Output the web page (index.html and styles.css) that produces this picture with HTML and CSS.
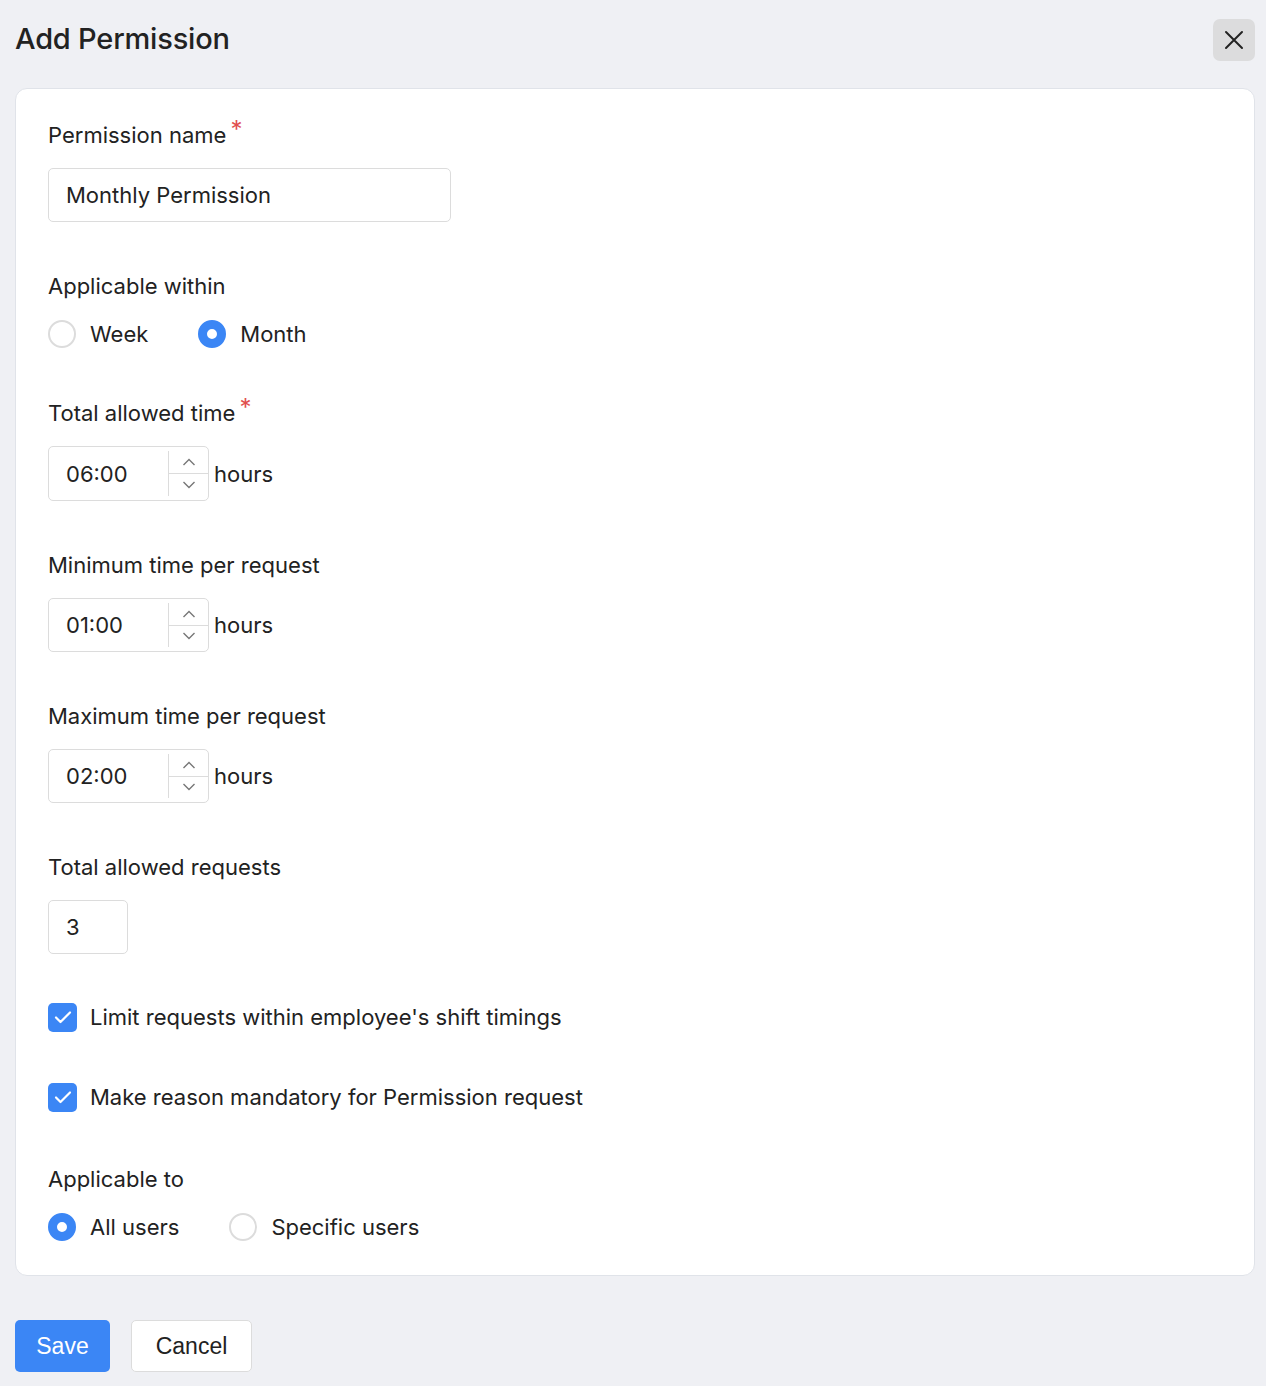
FILE: index.html
```html
<!DOCTYPE html>
<html>
<head>
<meta charset="utf-8">
<link rel="stylesheet" href="styles.css">
</head>
<body>
<div class="page">
  <header class="top">
    <h1 class="title">Add Permission</h1>
    <button class="close" aria-label="Close">
      <svg width="20" height="20" viewBox="0 0 20 20"><path d="M2 2L18 18M18 2L2 18" stroke="#222" stroke-width="2" stroke-linecap="round"/></svg>
    </button>
  </header>

  <section class="card">
    <div class="field">
      <div class="label">Permission name<span class="req">*</span></div>
      <div class="input name-input">Monthly Permission</div>
    </div>

    <div class="field">
      <div class="label">Applicable within</div>
      <div class="radios">
        <span class="radio-item"><span class="radio"></span>Week</span>
        <span class="radio-item"><span class="radio on"></span>Month</span>
      </div>
    </div>

    <div class="field total-field">
      <div class="label">Total allowed time<span class="req">*</span></div>
      <div class="time-row">
        <div class="spin">
          <span class="spin-val">06:00</span>
          <span class="spin-btns">
            <span class="arrow"><svg width="14" height="8" viewBox="0 0 14 8"><path d="M1.5 7L7 1.5L12.5 7" fill="none" stroke="#777" stroke-width="1.4"/></svg></span>
            <span class="arrow"><svg width="14" height="8" viewBox="0 0 14 8"><path d="M1.5 1L7 6.5L12.5 1" fill="none" stroke="#777" stroke-width="1.4"/></svg></span>
          </span>
        </div>
        <span class="unit">hours</span>
      </div>
    </div>

    <div class="field">
      <div class="label">Minimum time per request</div>
      <div class="time-row">
        <div class="spin">
          <span class="spin-val">01:00</span>
          <span class="spin-btns">
            <span class="arrow"><svg width="14" height="8" viewBox="0 0 14 8"><path d="M1.5 7L7 1.5L12.5 7" fill="none" stroke="#777" stroke-width="1.4"/></svg></span>
            <span class="arrow"><svg width="14" height="8" viewBox="0 0 14 8"><path d="M1.5 1L7 6.5L12.5 1" fill="none" stroke="#777" stroke-width="1.4"/></svg></span>
          </span>
        </div>
        <span class="unit">hours</span>
      </div>
    </div>

    <div class="field">
      <div class="label">Maximum time per request</div>
      <div class="time-row">
        <div class="spin">
          <span class="spin-val">02:00</span>
          <span class="spin-btns">
            <span class="arrow"><svg width="14" height="8" viewBox="0 0 14 8"><path d="M1.5 7L7 1.5L12.5 7" fill="none" stroke="#777" stroke-width="1.4"/></svg></span>
            <span class="arrow"><svg width="14" height="8" viewBox="0 0 14 8"><path d="M1.5 1L7 6.5L12.5 1" fill="none" stroke="#777" stroke-width="1.4"/></svg></span>
          </span>
        </div>
        <span class="unit">hours</span>
      </div>
    </div>

    <div class="field count-field">
      <div class="label">Total allowed requests</div>
      <div class="input count-input">3</div>
    </div>

    <div class="check-row">
      <span class="check"><svg width="18" height="14" viewBox="0 0 18 14"><path d="M2 7.5L6.5 12L16 2.5" fill="none" stroke="#fff" stroke-width="2.2" stroke-linecap="round" stroke-linejoin="round"/></svg></span>
      Limit requests within employee's shift timings
    </div>

    <div class="check-row">
      <span class="check"><svg width="18" height="14" viewBox="0 0 18 14"><path d="M2 7.5L6.5 12L16 2.5" fill="none" stroke="#fff" stroke-width="2.2" stroke-linecap="round" stroke-linejoin="round"/></svg></span>
      Make reason mandatory for Permission request
    </div>

    <div class="field last">
      <div class="label">Applicable to</div>
      <div class="radios">
        <span class="radio-item"><span class="radio on"></span>All users</span>
        <span class="radio-item"><span class="radio"></span>Specific users</span>
      </div>
    </div>
  </section>

  <footer class="actions">
    <button class="btn primary">Save</button>
    <button class="btn secondary">Cancel</button>
  </footer>
</div>
</body>
</html>
```

FILE: styles.css
```css
* { box-sizing: border-box; }
html, body {
  margin: 0;
  padding: 0;
  background: #eff0f4;
}
body {
  font-family: Inter, "Noto Sans", sans-serif;
  color: #222;
}
.page {
  width: 1266px;
  padding: 0 11px 0 15px;
}
.top {
  height: 88px;
  display: flex;
  align-items: flex-start;
  justify-content: space-between;
}
.title {
  margin: 20px 0 0 0;
  font-size: 29px;
  font-weight: 500;
  line-height: 38px;
  letter-spacing: -0.2px;
  color: #222;
}
.close {
  margin-top: 19px;
  width: 42px;
  height: 42px;
  border: none;
  border-radius: 7px;
  background: #dcdcdd;
  display: flex;
  align-items: center;
  justify-content: center;
  padding: 0;
}
.card {
  background: #fff;
  border: 1px solid #e0e3e9;
  border-radius: 12px;
  padding: 31px 32px 33px;
  height: 1188px;
  display: flex;
  flex-direction: column;
}
.field { display: flex; flex-direction: column; gap: 18px; margin-bottom: 49px; }
.field.count-field { margin-bottom: 48px; }
.field.last { margin-bottom: 0; }
.label {
  font-size: 22px;
  line-height: 30px;
  color: #222;
}
.req {
  color: #e14f4f;
  font-size: 24px;
  position: relative;
  top: -5px;
  margin-left: 4px;
}
.input {
  height: 54px;
  border: 1px solid #dcdcdc;
  border-radius: 5px;
  padding: 0 17px;
  font-size: 22px;
  display: flex;
  align-items: center;
  color: #222;
}
.name-input { width: 403px; }
.count-input { width: 80px; }
.radios { display: flex; height: 30px; align-items: center; gap: 50px; }
.radio-item {
  display: flex;
  align-items: center;
  gap: 14px;
  font-size: 22px;
  line-height: 30px;
}
.radio {
  width: 28px;
  height: 28px;
  border-radius: 50%;
  border: 2px solid #dcdcdc;
  background: #fff;
  display: inline-block;
}
.radio.on {
  border: 9px solid #3b86f5;
  background: #fff;
}
.time-row { display: flex; align-items: center; gap: 5px; }
.spin {
  width: 161px;
  height: 54px;
  border: 1px solid #dcdcdc;
  border-radius: 5px;
  display: flex;
}
.total-field .spin { height: 55px; }
.spin-val {
  flex: 1;
  display: flex;
  align-items: center;
  padding-left: 17px;
  font-size: 22px;
}
.spin-btns {
  width: 40px;
  margin: 4px 0;
  border-left: 1px solid #dcdcdc;
  display: flex;
  flex-direction: column;
}
.arrow {
  flex: 1;
  display: flex;
  align-items: center;
  justify-content: center;
}
.arrow:first-child { border-bottom: 1px solid #dcdcdc; }
.unit { font-size: 22px; }
.check-row {
  display: flex;
  align-items: center;
  gap: 13px;
  height: 30px;
  font-size: 22px;
  margin-bottom: 50px;
}
.check-row + .check-row { margin-bottom: 52px; }
.check {
  width: 29px;
  height: 29px;
  border-radius: 5px;
  background: #3b86f5;
  display: flex;
  align-items: center;
  justify-content: center;
}
.actions {
  display: flex;
  gap: 21px;
  margin-top: 44px;
}
.btn {
  height: 52px;
  border-radius: 5px;
  font-family: "Liberation Sans", Arial, sans-serif;
  font-size: 23px;
  padding: 0;
}
.primary {
  width: 95px;
  background: #3b86f5;
  color: #fff;
  border: none;
}
.secondary {
  width: 121px;
  background: #fff;
  color: #222;
  border: 1px solid #dcdcdc;
}
```
